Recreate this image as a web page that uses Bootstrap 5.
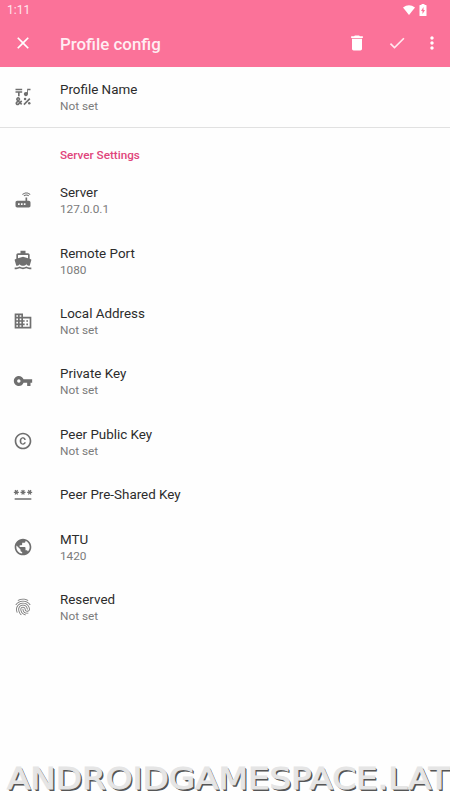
<!DOCTYPE html>
<html lang="en">
<head>
<meta charset="utf-8">
<meta name="viewport" content="width=device-width, initial-scale=1">
<title>Profile config</title>
<link href="https://cdn.jsdelivr.net/npm/bootstrap@5.3.0/dist/css/bootstrap.min.css" rel="stylesheet">
<style>
body{font-family:Roboto,sans-serif;background:#fefefe;height:800px;overflow:hidden}
svg{display:block;fill:currentColor;flex:none}
.app-header{background:#fb7299;color:#fff;height:67px}
.status-bar{height:20px;font-size:12px;line-height:20px;padding:0 23px 0 7px;color:#ffe6ed}
.tool-bar{height:47px;padding:0 8px 0 13px}
.tool-bar svg{margin-bottom:1px}
.tool-title{font-size:16.9px;font-weight:500;line-height:20px;margin-left:27px;color:#ffedf2}
.trash-icon{margin-right:20px}
.check-icon{color:#ffe9ef;margin-right:15px}
.pref{height:60.4px;padding-left:13.4px;line-height:17px}
.pref svg{width:20px;height:20px;margin-right:26.6px;margin-bottom:2px;color:#6f6f6f}
.pref-text{padding-top:1px}
.pref-short{height:44.8px}
.pref-title{font-size:13.4px;color:#2c2c2c}
.pref-value{font-size:11.8px;color:#7b7b7b}
.first-pref{height:61px;border-bottom:1px solid #e1e1e1}
.first-pref svg{margin-bottom:1px}
.section-title{height:42.6px;padding:19px 0 0 60px;font-size:11.7px;line-height:17px;font-weight:500;color:#e0457b}
.site-mark{left:6.500px;top:760.500px;font:29.500px/36px "DejaVu Sans",sans-serif;color:#e5e5e5;-webkit-text-stroke:1px #e5e5e5;text-shadow:1px 1px #555,1.600px 2px #555;transform:scaleX(1.155);transform-origin:0 0}
</style>
</head>
<body>
<header class="app-header">
  <div class="status-bar d-flex align-items-center">
    <span class="me-auto">1:11</span>
    <svg width="12" height="10" viewBox="0 0 12 10" fill="#fff"><path fill="#fff" d="M0 2.500Q6-2 12 2.500L6 10z"/></svg>
    <svg class="ms-1" width="8" height="12" viewBox="0 0 8 12"><path fill="#fff" d="M2.500 0h3v1H7q.5 0 .5.5v10q0 .5-.5.5H1q-.5 0-.5-.5v-10Q.5 1 1 1h1.500z"/><path fill="#fb7299" d="M4.500 3L2 7h1.500v3L6 6H4.500z"/></svg>
  </div>
  <nav class="tool-bar d-flex align-items-center">
    <svg width="20" height="20" viewBox="0 0 24 24"><path d="M19 6.410L17.590 5 12 10.590 6.410 5 5 6.410 10.590 12 5 17.590 6.410 19 12 13.410 17.590 19 19 17.590 13.410 12z"/></svg>
    <div class="tool-title me-auto">Profile config</div>
    <svg class="trash-icon" width="20" height="20" viewBox="0 0 24 24"><path d="M6 19c0 1.100.9 2 2 2h8c1.100 0 2-.9 2-2V7H6v12zM19 4h-3.500l-1-1h-5l-1 1H5v2h14V4z"/></svg>
    <svg class="check-icon" width="20" height="20" viewBox="0 0 24 24"><path d="M9 16.170L4.830 12l-1.420 1.410L9 19 21 7l-1.410-1.410z"/></svg>
    <svg width="20" height="20" viewBox="0 0 24 24"><path d="M12 8c1.100 0 2-.9 2-2s-.9-2-2-2-2 .9-2 2 .9 2 2 2zm0 2c-1.100 0-2 .9-2 2s.9 2 2 2 2-.9 2-2-.9-2-2-2zm0 6c-1.100 0-2 .9-2 2s.9 2 2 2 2-.9 2-2-.9-2-2-2z"/></svg>
  </nav>
</header>
<main>
  <div class="pref first-pref d-flex align-items-center">
    <svg viewBox="0 0 24 24"><path d="M3 2h8v2H3zM6 11h2V7h3V5H3v2h3zM12.400 20.400l7.070-7.070 1.414 1.414-7.070 7.070z"/><circle cx="14.500" cy="14.500" r="1.500"/><circle cx="19.500" cy="19.500" r="1.500"/><path d="M15.500 11c1.380 0 2.500-1.120 2.500-2.500V4h3V2h-4v4.510c-.42-.32-.93-.51-1.500-.51-1.380 0-2.500 1.120-2.500 2.500s1.120 2.500 2.500 2.500zM9.740 15.960l-1.410 1.410-.71-.71.350-.35c.98-.98.980-2.560 0-3.540-.49-.49-1.130-.73-1.770-.73s-1.280.24-1.770.73c-.98.98-.98 2.560 0 3.540l.350.35-1.060 1.060c-.98.98-.98 2.560 0 3.540.5.500 1.140.740 1.780.740s1.280-.24 1.770-.73l1.060-1.060 1.410 1.410 1.410-1.410-1.410-1.410 1.410-1.410-1.410-1.430zm-3.890-1.770c.12-.12.260-.15.350-.15s.23.030.350.150c.19.200.19.510 0 .71l-.35.350-.35-.36c-.12-.12-.15-.26-.15-.35s.03-.23.150-.35zm0 5.650c-.12.120-.26.150-.35.150s-.23-.03-.35-.15c-.12-.12-.15-.26-.15-.35s.03-.23.150-.35l1.060-1.060.71.710-1.070 1.050z"/></svg>
    <div class="pref-text"><div class="pref-title">Profile Name</div><div class="pref-value">Not set</div></div>
  </div>
  <h2 class="section-title mb-0">Server Settings</h2>
  <div class="pref d-flex align-items-center">
    <svg viewBox="0 0 24 24"><path d="M20.200 5.900l.8-.8C19.600 3.700 17.800 3 16 3s-3.600.7-5 2.100l.8.800C13 4.800 14.500 4.200 16 4.200s3 .6 4.200 1.700zm-.9.800c-.9-.9-2.100-1.400-3.300-1.400s-2.400.5-3.300 1.400l.8.800c.7-.7 1.600-1 2.500-1 .9 0 1.800.3 2.500 1l.8-.8zM19 13h-2V9h-2v4H5c-1.100 0-2 .9-2 2v4c0 1.100.9 2 2 2h14c1.100 0 2-.9 2-2v-4c0-1.100-.9-2-2-2zM8 18H6v-2h2v2zm3.500 0h-2v-2h2v2zm3.500 0h-2v-2h2v2z"/></svg>
    <div class="pref-text"><div class="pref-title">Server</div><div class="pref-value">127.0.0.1</div></div>
  </div>
  <div class="pref d-flex align-items-center">
    <svg viewBox="0 0 24 24"><path d="M20 21c-1.390 0-2.780-.47-4-1.320-2.440 1.710-5.560 1.710-8 0C6.780 20.530 5.390 21 4 21H2v2h2c1.380 0 2.740-.35 4-.99 2.520 1.290 5.480 1.290 8 0 1.260.65 2.620.99 4 .99h2v-2h-2zM3.950 19H4c1.600 0 3.020-.88 4-2 .98 1.120 2.400 2 4 2s3.020-.88 4-2c.98 1.120 2.400 2 4 2h.05l1.890-6.680c.08-.26.060-.54-.06-.78s-.34-.42-.6-.5L20 10.620V6c0-1.100-.9-2-2-2h-3V1H9v3H6c-1.100 0-2 .9-2 2v4.620l-1.290.42c-.26.080-.48.260-.6.500s-.15.520-.06.780L3.950 19zM6 6h12v3.970L12 8 6 9.970V6z"/></svg>
    <div class="pref-text"><div class="pref-title">Remote Port</div><div class="pref-value">1080</div></div>
  </div>
  <div class="pref d-flex align-items-center">
    <svg viewBox="0 0 24 24"><path d="M12 7V3H2v18h20V7H12zM6 19H4v-2h2v2zm0-4H4v-2h2v2zm0-4H4V9h2v2zm0-4H4V5h2v2zm4 12H8v-2h2v2zm0-4H8v-2h2v2zm0-4H8V9h2v2zm0-4H8V5h2v2zm10 12h-8v-2h2v-2h-2v-2h2v-2h-2V9h8v10zm-2-8h-2v2h2v-2zm0 4h-2v2h2v-2z"/></svg>
    <div class="pref-text"><div class="pref-title">Local Address</div><div class="pref-value">Not set</div></div>
  </div>
  <div class="pref d-flex align-items-center">
    <svg viewBox="0 0 24 24"><path d="M12.650 10C11.830 7.670 9.610 6 7 6c-3.310 0-6 2.690-6 6s2.690 6 6 6c2.610 0 4.830-1.670 5.650-4H17v4h4v-4h2v-4H12.650zM7 14c-1.100 0-2-.9-2-2s.9-2 2-2 2 .9 2 2-.9 2-2 2z"/></svg>
    <div class="pref-text"><div class="pref-title">Private Key</div><div class="pref-value">Not set</div></div>
  </div>
  <div class="pref d-flex align-items-center">
    <svg viewBox="0 0 24 24"><path d="M10.080 10.860c.05-.33.160-.62.300-.87s.34-.46.590-.62c.24-.15.540-.22.910-.23.230.01.440.05.630.13.200.09.380.210.520.360s.25.330.340.530.13.420.14.640h1.790c-.02-.47-.11-.9-.28-1.290s-.4-.73-.7-1.010-.66-.5-1.080-.66-.88-.23-1.390-.23c-.65 0-1.220.11-1.700.340s-.88.530-1.200.92-.56.840-.71 1.360S8 11.290 8 11.870v.27c0 .58.080 1.120.23 1.640s.39.970.71 1.350.72.690 1.200.91 1.050.34 1.700.34c.47 0 .91-.08 1.320-.23s.77-.36 1.080-.63.560-.58.740-.94.290-.74.300-1.150h-1.790c-.01.210-.06.400-.15.580s-.21.330-.36.460-.32.230-.52.300c-.19.070-.39.090-.6.100-.36-.01-.66-.08-.89-.23-.25-.16-.45-.37-.59-.62s-.25-.55-.3-.88-.08-.67-.08-1v-.27c0-.35.030-.68.080-1.010zM12 2C6.480 2 2 6.480 2 12s4.480 10 10 10 10-4.480 10-10S17.520 2 12 2zm0 18c-4.410 0-8-3.590-8-8s3.590-8 8-8 8 3.590 8 8-3.590 8-8 8z"/></svg>
    <div class="pref-text"><div class="pref-title">Peer Public Key</div><div class="pref-value">Not set</div></div>
  </div>
  <div class="pref pref-short d-flex align-items-center">
    <svg viewBox="0 0 24 24"><path d="M2 17h20v2H2v-2zm1.150-4.050L4 11.470l.850 1.480 1.300-.75-.85-1.480H7v-1.500H5.300l.85-1.470L4.850 7 4 8.470 3.150 7l-1.300.75.850 1.470H1v1.500h1.700l-.85 1.480 1.300.75zm6.700-.75l1.300.75.850-1.480.85 1.480 1.300-.75-.85-1.480H15v-1.500h-1.700l.85-1.470-1.300-.75L12 8.470 11.150 7l-1.300.75.850 1.470H9v1.500h1.700l-.85 1.480zM23 9.220h-1.700l.85-1.470-1.300-.75L20 8.470 19.150 7l-1.300.75.850 1.470H17v1.500h1.700l-.85 1.480 1.300.75.850-1.480.85 1.480 1.300-.75-.85-1.480H23v-1.500z"/></svg>
    <div class="pref-title">Peer Pre-Shared Key</div>
  </div>
  <div class="pref d-flex align-items-center">
    <svg viewBox="0 0 24 24"><path d="M12 2C6.480 2 2 6.480 2 12s4.480 10 10 10 10-4.480 10-10S17.520 2 12 2zm-1 17.930c-3.950-.49-7-3.850-7-7.930 0-.62.080-1.210.21-1.790L9 15v1c0 1.100.9 2 2 2v1.930zm6.900-2.540c-.26-.81-1-1.390-1.900-1.390h-1v-3c0-.55-.45-1-1-1H8v-2h2c.55 0 1-.45 1-1V7h2c1.100 0 2-.9 2-2v-.41c2.930 1.190 5 4.060 5 7.410 0 2.080-.8 3.970-2.100 5.390z"/></svg>
    <div class="pref-text"><div class="pref-title">MTU</div><div class="pref-value">1420</div></div>
  </div>
  <div class="pref d-flex align-items-center">
    <svg viewBox="0 0 24 24"><path d="M17.810 4.470c-.08 0-.16-.02-.23-.06C15.660 3.420 14 3 12.010 3c-1.980 0-3.860.47-5.570 1.410-.24.130-.54.040-.68-.2-.13-.24-.04-.55.200-.68C7.820 2.520 9.860 2 12.010 2c2.130 0 3.990.47 6.030 1.520.25.130.34.430.21.670-.09.180-.26.280-.44.280zM3.500 9.720c-.1 0-.2-.03-.29-.09-.23-.16-.28-.47-.12-.7.990-1.400 2.250-2.500 3.750-3.270C9.980 4.040 14 4.030 17.150 5.650c1.500.77 2.760 1.860 3.750 3.250.16.220.11.540-.12.700-.23.160-.54.110-.7-.12-.9-1.260-2.040-2.250-3.390-2.940-2.870-1.470-6.540-1.470-9.400.01-1.360.7-2.500 1.700-3.400 2.960-.08.140-.23.210-.39.210zm6.250 12.070c-.13 0-.26-.05-.35-.15-.87-.87-1.340-1.430-2.010-2.640-.69-1.230-1.050-2.730-1.050-4.340 0-2.970 2.540-5.390 5.660-5.390s5.660 2.420 5.660 5.390c0 .28-.22.500-.5.500s-.5-.22-.5-.5c0-2.420-2.090-4.390-4.660-4.390-2.570 0-4.660 1.970-4.660 4.390 0 1.440.32 2.770.930 3.850.640 1.150 1.080 1.640 1.850 2.420.190.200.190.510 0 .71-.11.100-.24.150-.37.150zm7.170-1.850c-1.190 0-2.240-.3-3.100-.89-1.490-1.010-2.380-2.650-2.380-4.390 0-.28.220-.5.500-.5s.5.220.5.500c0 1.410.720 2.740 1.940 3.560.710.480 1.540.710 2.540.710.240 0 .64-.03 1.040-.1.270-.05.530.13.580.410.050.270-.13.530-.41.580-.57.110-1.070.12-1.210.12zM14.910 22c-.04 0-.09-.01-.13-.02-1.590-.44-2.630-1.030-3.720-2.100-1.400-1.390-2.170-3.240-2.170-5.220 0-1.620 1.380-2.940 3.080-2.940 1.700 0 3.080 1.320 3.080 2.940 0 1.070.93 1.940 2.080 1.940s2.080-.87 2.080-1.940c0-3.770-3.250-6.830-7.250-6.830-2.840 0-5.440 1.580-6.610 4.030-.39.810-.59 1.760-.59 2.800 0 .78.070 2.010.67 3.610.1.260-.03.550-.29.640-.26.100-.55-.04-.64-.29-.49-1.310-.73-2.610-.73-3.960 0-1.200.23-2.290.68-3.240 1.330-2.790 4.280-4.600 7.510-4.600 4.550 0 8.250 3.510 8.250 7.830 0 1.620-1.380 2.940-3.080 2.940s-3.080-1.320-3.080-2.940c0-1.070-.93-1.940-2.080-1.940s-2.080.87-2.080 1.940c0 1.710.660 3.310 1.870 4.510.950.940 1.860 1.460 3.270 1.850.270.070.420.350.350.610-.05.230-.26.380-.47.380z"/></svg>
    <div class="pref-text"><div class="pref-title">Reserved</div><div class="pref-value">Not set</div></div>
  </div>
</main>
<div class="site-mark position-absolute text-nowrap">ANDROIDGAMESPACE.LAT</div>
</body>
</html>
